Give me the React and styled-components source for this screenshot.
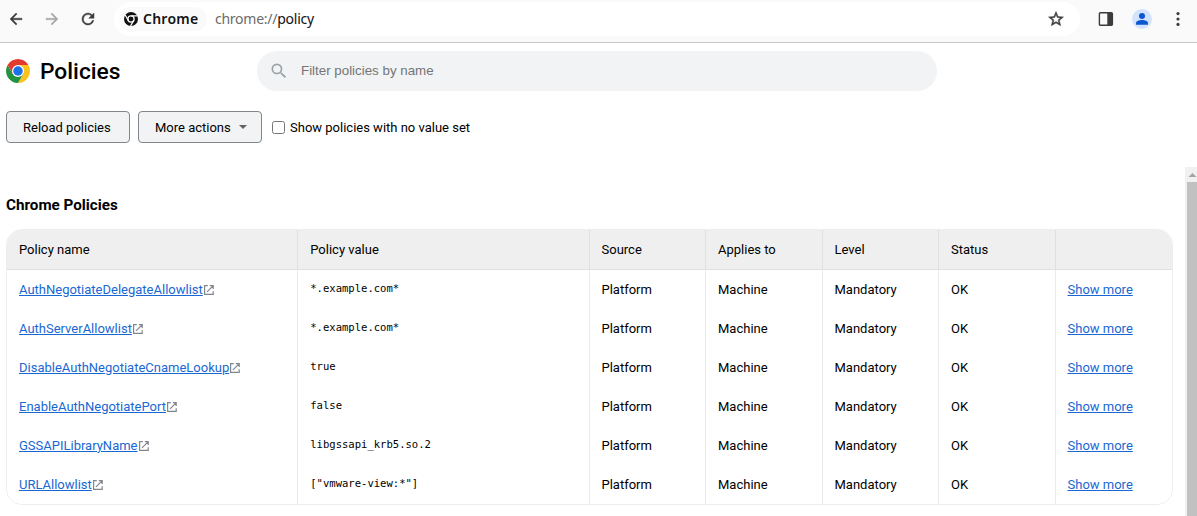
import React from 'react';
import styled, { createGlobalStyle } from 'styled-components';

const Global = createGlobalStyle`
  * { box-sizing: border-box; }
  body { margin: 0; background: #fff; color: #000; font: 13px/20px Roboto, sans-serif; overflow: hidden; }
`;
const Page = styled.div`
  display: flex; flex-direction: column; height: 516px; overflow: hidden;
`;
const Toolbar = styled.div`
  flex: none; height: 43px; display: flex; align-items: flex-start;
  background: #fafafa; border-bottom: 1px solid #c6c6c6;
`;
const IconSlot = styled.div`
  flex: none; width: ${p => p.$w || 36}px; height: 38px;
  display: flex; align-items: center; justify-content: center;
  color: ${p => p.$color || '#3c3c3c'};
  svg { display: block; }
`;
const Omnibox = styled.div`
  width: 966px; height: 34px; margin: 2px 8px 0 10px; padding: 0 6px 0 5px;
  display: flex; align-items: center; background: #fff; border-radius: 17px;
  font-family: "Noto Sans", sans-serif; font-size: 14px;
`;
const Chip = styled.div`
  width: 88px; height: 24px; padding-left: 5px; border-radius: 12px; background: #fafafa;
  display: flex; align-items: center; gap: 5px;
  font-weight: 600; letter-spacing: 0.25px; color: #111;
  svg { flex: none; }
`;
const Url = styled.div`
  margin-left: 8px; flex: 1; color: #6b6b6b; letter-spacing: -0.25px;
  span { color: #111; }
`;
const Avatar = styled.div`
  width: 20px; height: 20px; border-radius: 50%; background: #d3e3fd; color: #0b57d0;
`;
const Header = styled.header`
  flex: none; height: 56px; padding: 8px 0 8px 6px; display: flex; align-items: center;
  svg { flex: none; }
`;
const Title = styled.h1`
  width: 217px; margin: 0 0 0 10px; padding-top: 2px; font-size: 22.75px; line-height: 28px; font-weight: 500;
`;
const Search = styled.div`
  width: 680px; height: 40px; padding-left: 12px; border-radius: 20px; background: #f1f3f4;
  display: flex; align-items: center; gap: 12px;
  color: #757575; font-family: "Liberation Sans", sans-serif; font-size: 13.333px;
`;
const Actions = styled.div`
  flex: none; display: flex; align-items: center; gap: 8px; height: 32px; margin: 12px 0 24px 6px;
`;
const Button = styled.button`
  width: 124px; height: 32px; padding: 0 ${p => (p.$menu ? 14 : 16)}px 0 16px; margin: 0;
  display: flex; align-items: center; justify-content: space-between; white-space: nowrap;
  background: #f1f3f4; border: 1px solid #80868b; border-radius: 4px;
  color: #000; font: 13px Roboto, sans-serif;
`;
const Label = styled.label`
  display: flex; align-items: center; gap: 5px; margin-left: 2px; line-height: 21px;
  input { width: 13px; height: 13px; margin: 0; }
`;
const Caret = styled.i`
  border: 4px solid transparent; border-top: 4px solid #5f6368; border-bottom: 0;
`;
const Scroller = styled.div`flex: 1; display: flex; justify-content: space-between;`;
const Content = styled.main`width: 1173px; padding: 28px 0 0 6px;`;
const Heading = styled.h2`
  margin: 0 0 14px; font-size: 15.21px; line-height: 20px; font-weight: 700;
`;
const Table = styled.div`
  width: 1167px; border: 1px solid #ededed; border-radius: 16px; overflow: hidden;
`;
const Row = styled.div`
  display: grid; grid-template-columns: 2.5fr 2.5fr repeat(5, 1fr);
  height: ${p => (p.$head ? 40 : 39)}px;
  background: ${p => (p.$head ? '#efefef' : '#fff')};
  border-bottom: ${p => (p.$head ? '1px solid #e0e0e0' : '0')};
`;
const Cell = styled.div`
  display: flex; align-items: center; padding-left: 12px; min-width: 0;
  border-right: 1px solid ${p => (p.$head ? '#e0e0e0' : '#ebebeb')};
  &:last-child { border-right: 0; }
`;
const Value = styled(Cell)`
  font: 10.56px "DejaVu Sans Mono", monospace; padding-bottom: 3px;
`;
const Link = styled.a`
  color: #1967d2; text-decoration: underline;
`;
const Scrollbar = styled.div`
  width: 12px; background: #f1f1f1; display: flex; flex-direction: column;
  svg { display: block; flex: none; }
`;
const Thumb = styled.div`flex: 1; margin-left: 2px; background: #c1c1c1;`;

const Icon = ({ d, size = 18, bold }) => (
  <svg width={size} height={size} viewBox="0 0 24 24" fill="currentColor" stroke="currentColor" strokeWidth={bold ? 0.6 : 0}><path d={d} /></svg>
);

const ChromeMark = () => (
  <svg width="14" height="14" viewBox="0 0 24 24">
    <circle cx="12" cy="12" r="12" fill="#111" />
    <circle cx="12" cy="12" r="5.3" fill="none" stroke="#fafafa" strokeWidth="2.2" />
    <path d="M12 6.7H23M7.4 14.6L2 5.2M16.6 14.6L11.2 24" stroke="#fafafa" strokeWidth="2.2" />
  </svg>
);

const ChromeLogo = () => (
  <svg width="24" height="24" viewBox="0 0 24 24">
    <path d="M12 6H22.39A12 12 0 0 1 12 24L17.2 15Z" fill="#fcc31e" />
    <path d="M6.8 15L1.61 6A12 12 0 0 0 12 24L17.2 15L12 12Z" fill="#229342" />
    <path d="M1.61 6L6.8 15L12 12V6H22.39A12 12 0 0 0 1.61 6Z" fill="#e33b2e" />
    <circle cx="12" cy="12" r="6" fill="#fff" />
    <circle cx="12" cy="12" r="4.75" fill="#1a73e8" />
  </svg>
);

const External = () => (
  <svg width="12" height="12" viewBox="0 0 12 12" fill="none" stroke="#80868b" strokeWidth="1.2">
    <path d="M4.8 1.6H1.6V10.4H10.2V7.2M6.8 1.6H10.2V5M10 1.8L4 7.8" />
  </svg>
);

const columns = ['Policy name', 'Policy value', 'Source', 'Applies to', 'Level', 'Status', ''];
const policies = [
  ['AuthNegotiateDelegateAllowlist', '*.example.com*'],
  ['AuthServerAllowlist', '*.example.com*'],
  ['DisableAuthNegotiateCnameLookup', 'true'],
  ['EnableAuthNegotiatePort', 'false'],
  ['GSSAPILibraryName', 'libgssapi_krb5.so.2'],
  ['URLAllowlist', '["vmware-view:*"]'],
];

export default function App() {
  return (
    <Page>
      <Global />
      <Toolbar>
        <IconSlot $w={32}><Icon bold d="M20 11H7.83l5.59-5.59L12 4l-8 8 8 8 1.41-1.41L7.83 13H20v-2z" /></IconSlot>
        <IconSlot $w={39} $color="#a8a8a8"><Icon bold d="M12 4l-1.41 1.41L16.17 11H4v2h12.17l-5.58 5.59L12 20l8-8z" /></IconSlot>
        <IconSlot $w={33}><Icon bold d="M17.65 6.35A7.96 7.96 0 0 0 12 4a8 8 0 1 0 7.73 10h-2.08A6 6 0 1 1 12 6c1.66 0 3.14.69 4.22 1.78L13 11h7V4l-2.35 2.35z" /></IconSlot>
        <Omnibox>
          <Chip><ChromeMark />Chrome</Chip>
          <Url>chrome://<span>policy</span></Url>
          <IconSlot><Icon bold d="M22 9.24l-7.19-.62L12 2 9.19 8.63 2 9.24l5.46 4.73L5.82 21 12 17.27 18.18 21l-1.63-7.03L22 9.24zM12 15.4l-3.76 2.27 1-4.28-3.32-2.88 4.38-.38L12 6.1l1.71 4.04 4.38.38-3.32 2.88 1 4.28L12 15.4z" /></IconSlot>
        </Omnibox>
        <IconSlot>
          <svg width="16" height="14" viewBox="0 0 16 14" fill="none">
            <rect x="1.4" y=".8" width="13" height="12.4" rx="1" stroke="currentColor" strokeWidth="1.4" />
            <path d="M9.3 1H14v12H9.3z" fill="currentColor" />
          </svg>
        </IconSlot>
        <IconSlot>
          <Avatar><svg width="20" height="20" viewBox="0 0 20 20" fill="currentColor"><circle cx="10" cy="7" r="3" /><path d="M4 15.8v-1.6c0-2.2 3-3.2 6-3.2s6 1 6 3.2v1.6z" /></svg></Avatar>
        </IconSlot>
        <IconSlot>
          <svg width="4" height="14" viewBox="0 0 4 14" fill="currentColor"><circle cx="2" cy="1.6" r="1.6" /><circle cx="2" cy="7" r="1.6" /><circle cx="2" cy="12.4" r="1.6" /></svg>
        </IconSlot>
      </Toolbar>
      <Header>
        <ChromeLogo />
        <Title>Policies</Title>
        <Search>
          <svg width="20" height="20" viewBox="0 0 24 24" fill="#9aa0a6"><path d="M15.5 14h-.79l-.28-.27A6.47 6.47 0 0 0 16 9.5 6.5 6.5 0 1 0 9.5 16c1.61 0 3.09-.59 4.23-1.57l.27.28v.79l5 4.99L20.49 19l-4.99-5zm-6 0a4.5 4.5 0 1 1 0-9 4.5 4.5 0 0 1 0 9z" /></svg>
          Filter policies by name
        </Search>
      </Header>
      <Actions>
        <Button>Reload policies</Button>
        <Button $menu>More actions<Caret /></Button>
        <Label><input type="checkbox" />Show policies with no value set</Label>
      </Actions>
      <Scroller>
        <Content>
          <Heading>Chrome Policies</Heading>
          <Table>
            <Row $head>{columns.map(c => <Cell $head key={c}>{c}</Cell>)}</Row>
            {policies.map(([name, value]) => (
              <Row key={name}>
                <Cell><Link>{name}</Link><External /></Cell>
                <Value>{value}</Value>
                <Cell>Platform</Cell>
                <Cell>Machine</Cell>
                <Cell>Mandatory</Cell>
                <Cell>OK</Cell>
                <Cell><Link>Show more</Link></Cell>
              </Row>
            ))}
          </Table>
        </Content>
        <Scrollbar>
          <svg width="12" height="15" viewBox="0 0 12 15"><path d="M3.5 10L7.5 6L11.5 10Z" fill="#a3a3a3" /></svg>
          <Thumb />
        </Scrollbar>
      </Scroller>
    </Page>
  );
}
